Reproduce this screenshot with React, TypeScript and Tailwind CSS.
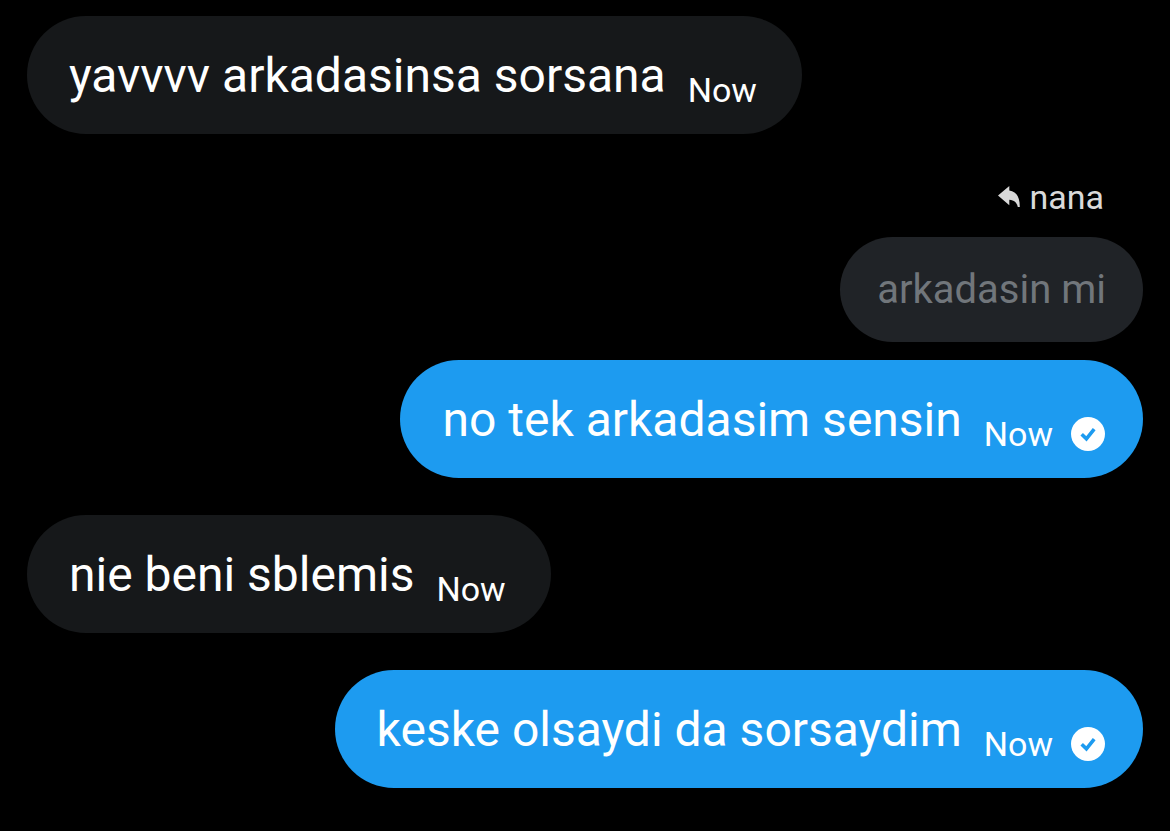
import React from "react";

interface Message {
  id: number;
  text: string;
  time: string;
  mine: boolean;
  replyTo?: { name: string; text: string };
}

const messages: Message[] = [
  { id: 1, text: "yavvvv arkadasinsa sorsana", time: "Now", mine: false },
  {
    id: 2,
    text: "no tek arkadasim sensin",
    time: "Now",
    mine: true,
    replyTo: { name: "nana", text: "arkadasin mi" },
  },
  { id: 3, text: "nie beni sblemis", time: "Now", mine: false },
  { id: 4, text: "keske olsaydi da sorsaydim", time: "Now", mine: true },
];

const ReplyIcon: React.FC = () => (
  <svg viewBox="0 0 22 22" className="size-[22px]" fill="currentColor" aria-hidden="true">
    <path d="M11.3 0v4.5C18 5.4 21.8 10.6 21.8 20.9h-2C18.8 16.4 16.2 14.2 11.3 13.8v5.4L0 9.6z" />
  </svg>
);

const SentIcon: React.FC = () => (
  <svg viewBox="0 0 34 34" className="size-[34px] shrink-0" role="img" aria-label="Sent">
    <circle cx="17" cy="17" r="17" fill="#fff" />
    <path d="M10.7 17.3l4.7 4.6 7.8-9.7" fill="none" stroke="#1d9bf0" strokeWidth="3.6" />
  </svg>
);

// Quoted message shown above a reply
const ReplyPreview: React.FC<{ name: string; text: string }> = ({ name, text }) => (
  <div className="flex flex-col items-end gap-[18px]">
    <div className="flex items-center gap-[9px] pr-[39px] pt-1 text-[#d9d9d9]">
      <ReplyIcon />
      <span className="text-[34px] leading-[44px]">{name}</span>
    </div>
    <div className="rounded-[53px] bg-[#202327] px-[37px] pb-[26px] pt-[27px] text-[40px] leading-[52px] text-[#71767b]">
      {text}
    </div>
  </div>
);

const Bubble: React.FC<{ message: Message }> = ({ message }) => (
  <div
    className={`flex items-end rounded-[59px] py-[22px] text-white ${
      message.mine ? "bg-[#1d9bf0] pl-[42px] pr-[38px]" : "bg-[#16181a] pl-[42px] pr-[45px]"
    }`}
  >
    <p className="pb-[3px] pt-[5px] text-[48px] leading-[66px]">{message.text}</p>
    <div className="ml-[22px] flex items-center gap-[18px] pb-px">
      <span className="text-[34px] leading-[42px]">{message.time}</span>
      {message.mine && <SentIcon />}
    </div>
  </div>
);

export default function App() {
  return (
    <main className="min-h-screen bg-black px-[27px] py-4 font-['Roboto',sans-serif]">
      <ol className="flex flex-col gap-[37px]">
        {messages.map((message) => (
          <li
            key={message.id}
            className={`flex flex-col gap-[18px] ${message.mine ? "items-end" : "items-start"}`}
          >
            {message.replyTo && <ReplyPreview {...message.replyTo} />}
            <Bubble message={message} />
          </li>
        ))}
      </ol>
    </main>
  );
}
